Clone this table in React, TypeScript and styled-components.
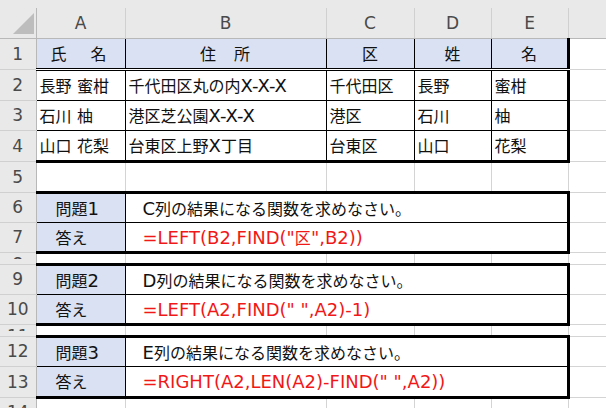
import React from "react";
import styled, { createGlobalStyle } from "styled-components";

type Edge = "thin" | "thick" | "double";

const edgeStyle = (e: Edge | undefined, fallback: string) => {
  if (e === "thin") return "1px solid #000";
  if (e === "thick") return "3px solid #000";
  if (e === "double") return "3px double #000";
  return fallback;
};

const GlobalStyle = createGlobalStyle`
  html, body {
    margin: 0;
    padding: 0;
    background: #fff;
  }
  body {
    overflow: hidden;
    font-family: "Noto Sans CJK JP", "DejaVu Sans", sans-serif;
  }
`;

const Window = styled.div`
  width: 606px;
  height: 408px;
  overflow: hidden;
  background: #fff;
`;

const TopStrip = styled.div`
  height: 8px;
  background: #e9e9e9;
`;

const Sheet = styled.table`
  border-collapse: collapse;
  table-layout: fixed;
  width: 628px;
  font-size: 16px;
  color: #111;
`;

const Row = styled.tr<{ $h: number }>`
  height: ${(p) => p.$h}px;
`;

const Corner = styled.th`
  padding: 0;
  background: #e9e9e9;
  border-right: 1px solid #b8b8b8;
  border-bottom: 1px solid #b8b8b8;
  vertical-align: bottom;
  text-align: right;

  svg {
    display: block;
    margin: 0 2px 4px auto;
  }
`;

const ColHead = styled.th`
  padding: 0;
  background: #e9e9e9;
  border-right: 1px solid #d0d0d0;
  border-bottom: 1px solid #b8b8b8;
  font-family: "DejaVu Sans", sans-serif;
  font-size: 17px;
  font-weight: normal;
  color: #4a4a4a;
  text-align: center;
`;

const RowHead = styled.th<{ $small?: boolean }>`
  padding: 0;
  background: #e9e9e9;
  border-right: 1px solid #b8b8b8;
  border-bottom: 1px solid #d0d0d0;
  font-family: "DejaVu Sans", sans-serif;
  font-size: 17px;
  font-weight: normal;
  color: #4a4a4a;
  text-align: center;
  vertical-align: ${(p) => (p.$small ? "top" : "middle")};
  overflow: hidden;
`;

const Clipped = styled.div`
  height: 3px;
  margin-top: 3px;
  line-height: 16px;
  overflow: hidden;
`;

const Cell = styled.td<{
  $fill?: boolean;
  $center?: boolean;
  $indent?: number;
  $spacing?: number;
  $top?: Edge;
  $right?: Edge;
  $bottom?: Edge;
}>`
  padding: 0 3px 0 ${(p) => (p.$center ? 3 : p.$indent ?? 3)}px;
  background: ${(p) => (p.$fill ? "#d9e1f2" : "#fff")};
  border-top: ${(p) => edgeStyle(p.$top, "none")};
  border-left: none;
  border-right: ${(p) => edgeStyle(p.$right, "1px solid #d4d4d4")};
  border-bottom: ${(p) => edgeStyle(p.$bottom, "1px solid #d4d4d4")};
  text-align: ${(p) => (p.$center ? "center" : "left")};
  letter-spacing: ${(p) => p.$spacing ?? 0}px;
  word-spacing: 2px;
  white-space: nowrap;
  overflow: hidden;
  vertical-align: middle;
`;

const Latin = styled.span`
  font-family: "DejaVu Sans", sans-serif;
  font-size: 18px;
  word-spacing: 0;
`;

const Formula = styled(Latin)`
  color: #f01818;
`;

const Kanji = styled.span`
  font-family: "Noto Sans CJK JP", sans-serif;
  font-size: 16px;
`;

const CornerMark = () => (
  <svg width="21" height="21" viewBox="0 0 21 21">
    <polygon points="21,0 21,21 0,21" fill="#bdbdbd" />
  </svg>
);

const columns = [
  { key: "A", width: 89 },
  { key: "B", width: 201 },
  { key: "C", width: 88 },
  { key: "D", width: 77 },
  { key: "E", width: 77 },
  { key: "", width: 60 },
];

const people = [
  { n: 2, name: "長野 蜜柑", ward: "千代田区", street: "丸の内", rest: "X-X-X", sei: "長野", mei: "蜜柑" },
  { n: 3, name: "石川 柚", ward: "港区", street: "芝公園", rest: "X-X-X", sei: "石川", mei: "柚" },
  { n: 4, name: "山口 花梨", ward: "台東区", street: "上野", rest: "X", tail: "丁目", sei: "山口", mei: "花梨" },
];

const questions = [
  {
    n: 6,
    label: "1",
    col: "C",
    answer: (
      <>
        =LEFT(B2,FIND("<Kanji>区</Kanji>",B2))
      </>
    ),
  },
  { n: 9, label: "2", col: "D", answer: <>=LEFT(A2,FIND(" ",A2)-1)</> },
  { n: 12, label: "3", col: "E", answer: <>=RIGHT(A2,LEN(A2)-FIND(" ",A2))</> },
];

const SmallRow: React.FC<{ n: number }> = ({ n }) => (
  <Row $h={12}>
    <RowHead $small>
      <Clipped>{n}</Clipped>
    </RowHead>
    {columns.map((c) => (
      <Cell key={c.width + c.key} />
    ))}
  </Row>
);

export default function App() {
  return (
    <Window>
      <GlobalStyle />
      <TopStrip />
      <Sheet>
        <colgroup>
          <col style={{ width: 36 }} />
          {columns.map((c) => (
            <col key={c.key + c.width} style={{ width: c.width }} />
          ))}
        </colgroup>
        <tbody>
          <Row $h={30}>
            <Corner>
              <CornerMark />
            </Corner>
            {columns.map((c) => (
              <ColHead key={c.key + c.width}>{c.key}</ColHead>
            ))}
          </Row>

          <Row $h={31}>
            <RowHead>1</RowHead>
            <Cell $fill $center $spacing={4} $right="thin" $bottom="double">
              氏　名
            </Cell>
            <Cell $fill $center $spacing={1} $right="thin" $bottom="double">
              住　所
            </Cell>
            <Cell $fill $center $right="thin" $bottom="double">
              区
            </Cell>
            <Cell $fill $center $right="thin" $bottom="double">
              姓
            </Cell>
            <Cell $fill $center $right="thick" $bottom="double">
              名
            </Cell>
            <Cell />
          </Row>

          {people.map((p, i) => {
            const bottom: Edge = i === people.length - 1 ? "thick" : "thin";
            return (
              <Row key={p.n} $h={i === 1 ? 30 : 31}>
                <RowHead>{p.n}</RowHead>
                <Cell $right="thin" $bottom={bottom}>
                  {p.name}
                </Cell>
                <Cell $right="thin" $bottom={bottom}>
                  {p.ward}
                  {p.street}
                  <Latin>{p.rest}</Latin>
                  {p.tail}
                </Cell>
                <Cell $right="thin" $bottom={bottom}>
                  {p.ward}
                </Cell>
                <Cell $right="thin" $bottom={bottom}>
                  {p.sei}
                </Cell>
                <Cell $right="thick" $bottom={bottom}>
                  {p.mei}
                </Cell>
                <Cell />
              </Row>
            );
          })}

          <Row $h={31}>
            <RowHead>5</RowHead>
            {columns.map((c) => (
              <Cell key={c.key + c.width} />
            ))}
          </Row>

          {questions.map((q, i) => (
            <React.Fragment key={q.n}>
              <Row $h={30}>
                <RowHead>{q.n}</RowHead>
                <Cell $fill $indent={19} $top="thick" $right="thin" $bottom="thin">
                  問題<Latin>{q.label}</Latin>
                </Cell>
                <Cell colSpan={4} $indent={17} $top="thick" $right="thick" $bottom="thin">
                  <Latin>{q.col}</Latin>列の結果になる関数を求めなさい。
                </Cell>
                <Cell />
              </Row>
              <Row $h={i === 2 ? 31 : 30}>
                <RowHead>{q.n + 1}</RowHead>
                <Cell $fill $indent={19} $right="thin" $bottom="thick">
                  答え
                </Cell>
                <Cell colSpan={4} $indent={17} $right="thick" $bottom="thick">
                  <Formula>{q.answer}</Formula>
                </Cell>
                <Cell />
              </Row>
              {i < 2 && <SmallRow n={q.n + 2} />}
            </React.Fragment>
          ))}

          <Row $h={30}>
            <RowHead>14</RowHead>
            {columns.map((c) => (
              <Cell key={c.key + c.width} />
            ))}
          </Row>
        </tbody>
      </Sheet>
    </Window>
  );
}
